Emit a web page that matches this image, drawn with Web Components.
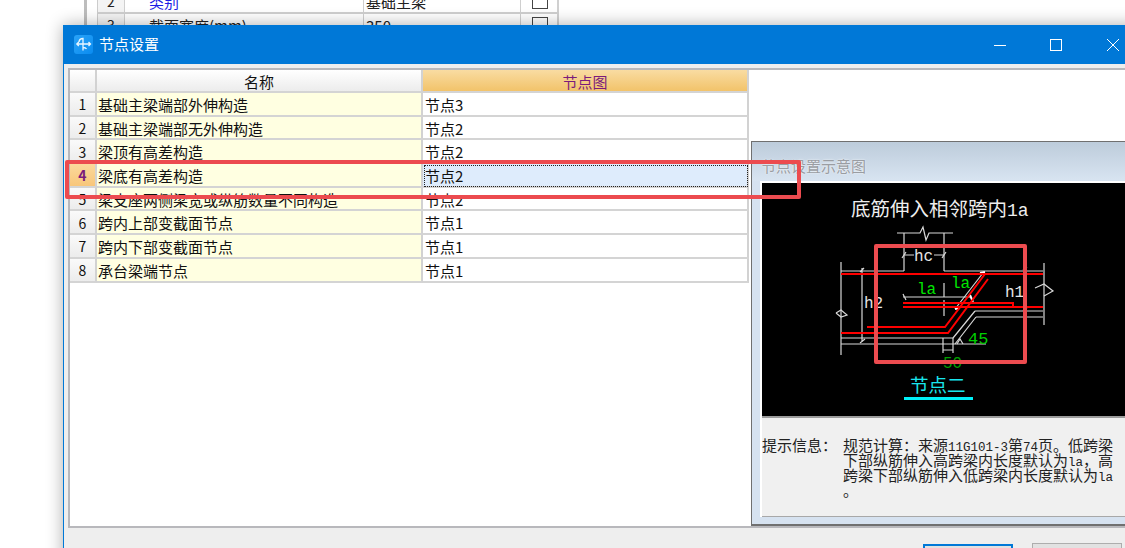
<!DOCTYPE html>
<html lang="zh">
<head>
<meta charset="utf-8">
<title>节点设置</title>
<style>
  html, body { margin: 0; height: 100%; background: #fff; overflow: hidden; }
  body { font: 15px/1.2 "Noto Sans CJK SC", "Liberation Sans", sans-serif; color: #111; }
</style>
</head>
<body>
<back-window></back-window>
<node-dialog>
  <node-table slot="table"></node-table>
  <node-preview slot="preview"></node-preview>
</node-dialog>
<mark-box x="65" y="160" w="736" h="39"></mark-box>
<mark-box x="874" y="244" w="153" h="120"></mark-box>

<script>
const CELL_FONT = '"Noto Sans CJK SC", "Liberation Sans", sans-serif';

class BackWindow extends HTMLElement {
  constructor() {
    super();
    const root = this.attachShadow({ mode: 'open' });
    root.innerHTML = `
      <style>
        :host {
          position: absolute;
          left: 84px;
          top: 0;
          width: 475px;
          height: 40px;
          overflow: hidden;
          display: flex;
          font: 15px ${CELL_FONT};
          color: #222;
        }
        .bar { width: 3px; background: #bdbdbd; margin-right: 10px; }
        .grid {
          width: 462px;
          margin-top: -10px;
          display: grid;
          grid-template-columns: 27px 239px 157px 39px;
          grid-auto-rows: 24px;
          border-left: 1px solid #ccc;
          border-right: 2px solid #d0d0d0;
          box-sizing: border-box;
        }
        .grid > div {
          border-bottom: 2px solid #cfcfcf;
          border-right: 1px solid #cfcfcf;
          display: flex;
          align-items: center;
          box-sizing: border-box;
          white-space: nowrap;
          overflow: hidden;
        }
        .num { justify-content: center; background: #f4f4f4; font-size: 14px; }
        .name { padding-left: 24px; }
        .blue { color: #1c1ce6; }
        .val { padding-left: 2px; }
        .chk { justify-content: center; }
        .chk i { width: 14px; height: 14px; border: 1.5px solid #444; background: #fff; display: block; }
      </style>
      <div class="bar"></div>
      <div class="grid">
        <div class="num">2</div><div class="name blue">类别</div><div class="val">基础主梁</div><div class="chk"><i></i></div>
        <div class="num">3</div><div class="name">截面宽度(mm)</div><div class="val">350</div><div class="chk"><i></i></div>
      </div>
    `;
  }
}

class NodeDialog extends HTMLElement {
  constructor() {
    super();
    const root = this.attachShadow({ mode: 'open' });
    root.innerHTML = `
      <style>
        :host {
          position: absolute;
          left: 63px;
          top: 25px;
          width: 1078px;
          height: 540px;
          display: flex;
          flex-direction: column;
          background: #eee;
          border-left: 1px solid #0078d7;
          box-sizing: border-box;
          box-shadow: 0 0 16px rgba(0,0,0,.32);
        }
        .title {
          height: 39px;
          flex: none;
          background: #0078d7;
          color: #fff;
          display: flex;
          align-items: center;
          padding-left: 10px;
        }
        .title svg.logo { width: 19px; height: 19px; margin-right: 6px; }
        .title span { flex: 1; font-size: 15px; line-height: 37px; height: 39px; }
        .ctl { width: 56.5px; height: 39px; display: flex; align-items: center; justify-content: center; }
        .ctl svg { width: 14px; height: 14px; }
        .panel {
          margin: 4px 0 0 4px;
          height: 460px;
          flex: none;
          box-sizing: border-box;
          border: 2px solid #b8b8bc;
          border-right: 0;
          background: #fff;
          display: flex;
        }
        .left { width: 681px; flex: none; }
        .right { flex: 1; min-width: 0; margin-top: 71px; display: flex; }
        .foot {
          display: flex;
          justify-content: flex-end;
          gap: 19px;
          padding: 15px 19px 0 0;
        }
        .btn { width: 90px; height: 30px; box-sizing: border-box; background: #e1e1e1; border: 1px solid #adadad; }
        .btn.on { border: 2px solid #0078d7; margin-top: 1px; }
      </style>
      <div class="title">
        <svg class="logo" viewBox="0 0 19 19">
          <defs><linearGradient id="lg" x1="0" y1="0" x2="1" y2="1">
            <stop offset="0" stop-color="#2aa3f8"/><stop offset="1" stop-color="#0a8cf0"/>
          </linearGradient></defs>
          <rect width="19" height="19" rx="3" fill="url(#lg)"/>
          <path d="M9 15.5V3.5C6.5 3.5 5.2 5 5 7M2.8 9H16.5M4.8 7L2.8 9L4.8 11M14.5 7L16.5 9L14.5 11M9 12.5C11 12.5 12 13 12.5 14" fill="none" stroke="#e9f6ff" stroke-width="1.3"/>
        </svg>
        <span>节点设置</span>
        <div class="ctl"><svg viewBox="0 0 14 14"><path d="M1 7.5H13" stroke="#fff" stroke-width="1"/></svg></div>
        <div class="ctl"><svg viewBox="0 0 14 14"><rect x="1.5" y="1.5" width="11" height="11" fill="none" stroke="#fff" stroke-width="1"/></svg></div>
        <div class="ctl"><svg viewBox="0 0 14 14"><path d="M1 1L13 13M13 1L1 13" stroke="#fff" stroke-width="1"/></svg></div>
      </div>
      <div class="panel">
        <div class="left"><slot name="table"></slot></div>
        <div class="right"><slot name="preview"></slot></div>
      </div>
      <div class="foot">
        <div class="btn on"></div>
        <div class="btn"></div>
      </div>
    `;
  }
}

class NodeTable extends HTMLElement {
  constructor() {
    super();
    const root = this.attachShadow({ mode: 'open' });
    const rows = [
      ['基础主梁端部外伸构造', '节点3'],
      ['基础主梁端部无外伸构造', '节点2'],
      ['梁顶有高差构造', '节点2'],
      ['梁底有高差构造', '节点2'],
      ['梁支座两侧梁宽或纵筋数量不同构造', '节点2'],
      ['跨内上部变截面节点', '节点1'],
      ['跨内下部变截面节点', '节点1'],
      ['承台梁端节点', '节点1']
    ];
    const body = rows.map((r, i) => {
      const sel = i === 3;
      return `
        <div class="c no ${sel ? 'cur' : ''}">${i + 1}</div>
        <div class="c name">${r[0]}</div>
        <div class="c val ${sel ? 'sel' : ''}">${r[1]}</div>`;
    }).join('');
    root.innerHTML = `
      <style>
        :host {
          display: grid;
          grid-template-columns: 27px 326px 326px;
          grid-template-rows: 23px repeat(8, 23.7px);
          font: 15px ${CELL_FONT};
          color: #111;
        }
        .c {
          display: flex;
          align-items: center;
          box-sizing: border-box;
          padding-top: 1px;
          border-right: 2px solid #d2d2d2;
          border-bottom: 2px solid #d4d4d4;
          white-space: nowrap;
          overflow: hidden;
        }
        .hd { justify-content: center; background: linear-gradient(#fff, #ececec); }
        .hd.on { background: linear-gradient(#f9dca2, #f2c36a); color: #7b1c7b; }
        .no { justify-content: center; background: linear-gradient(#fafafa, #ececec); font-size: 14px; }
        .no.cur { background: linear-gradient(#fbd99c, #f8c67a); color: #7b1c7b; font-weight: 700; }
        .name { background: #ffffe1; padding-left: 1px; }
        .val { background: #fff; padding-left: 2px; }
        .val.sel { background: #deecfc; outline: 1px dotted #222; outline-offset: -2px; }
      </style>
      <div class="c hd"></div>
      <div class="c hd">名称</div>
      <div class="c hd on">节点图</div>
      ${body}
    `;
  }
}

class NodePreview extends HTMLElement {
  constructor() {
    super();
    const root = this.attachShadow({ mode: 'open' });
    root.innerHTML = `
      <style>
        :host {
          flex: 1;
          min-width: 0;
          display: flex;
          flex-direction: column;
          box-sizing: border-box;
          border: 1px solid #707070;
          border-bottom-width: 2px;
          border-right: 0;
          background: #d6e2f0;
          font: 15px ${CELL_FONT};
        }
        .cap {
          height: 39px;
          flex: none;
          box-sizing: border-box;
          padding: 14px 0 0 9px;
          line-height: 20px;
          color: #9a9da2;
          text-shadow: 0 0 2px #fff;
          background: linear-gradient(#bdccdb, #d8e4f1);
        }
        .body { flex: none; margin-left: 8px; border-top: 2px solid #fff; border-left: 2px solid #fff; background: #f0f0f0; }
        .pic { height: 233px; background: #000; border-bottom: 2px solid #9c9c9c; }
        .pic svg { display: block; }
        .info {
          height: 99px;
          box-sizing: border-box;
          padding: 19px 0 0 0;
          display: flex;
          color: #222;
          border-bottom: 1px solid #a8a8a8;
        }
        .info .lb { width: 81px; flex: none; height: 15px; line-height: 15px; white-space: nowrap; }
        .info .tx div { height: 15px; line-height: 15px; white-space: nowrap; }
        .m { font: 12.5px/15px "Liberation Mono", monospace; }
      </style>
      <div class="cap">节点设置示意图</div>
      <div class="body">
        <div class="pic">
          <svg width="379" height="233" viewBox="762 183 379 233" fill="none">
            <g stroke="#d8d8d8" stroke-width="1.2">
              <path d="M897 233H920L923 227L926 240L929 233H953"/>
              <path d="M904 233V271M944 233V271M944 283V297M944 300V316"/>
              <path d="M904 255H914M934 255H944M902 258L906 252M942 258L946 252"/>
              <path d="M841 271H904M944 271H1043"/>
              <path d="M841 262V355M1044 263V325M862 268V342M860 343L865 339M860 272L864 268"/>
              <path d="M836 313L841 310L847 315L841 317L836 313"/>
              <path d="M1035 288L1044 284L1053 291L1044 296"/>
              <path d="M903 297H970M903 294L906 300"/>
              <path d="M975 311H1043M976 317H1043M975 311L953 338M976 317L955 344"/>
              <path d="M841 338H953M841 344H986"/>
              <path d="M943 338V353M953 338V353M943 350H953"/>
              <path d="M955 309L983 273"/>
              <path d="M957 344L960 339L963 344"/>
              <path d="M1023 270L1027 267M1023 311L1027 308"/>
            </g>
            <path d="M955 309L960 308M980 273L985 272M970 295L973 302" stroke="#fff" stroke-width="2"/>
            <g stroke="#f00" stroke-width="2">
              <path d="M841 274H1043"/>
              <path d="M903 303H1013V306M903 307H1043"/>
              <path d="M867 327H945L985 274"/>
              <path d="M841 333H948L988 279"/>
            </g>
            <g font-family="'Liberation Mono', monospace" font-size="16">
              <text x="914" y="261" fill="#e6e6e6">hc</text>
              <text x="864" y="308" fill="#e6e6e6">h2</text>
              <text x="1005" y="297" fill="#e6e6e6">h1</text>
              <text x="917" y="294" fill="#00e600">la</text>
              <text x="951" y="288" fill="#00e600">la</text>
              <text x="968" y="344" fill="#00d000" font-size="17">45</text>
              <text x="943" y="368" fill="#00a000">50</text>
            </g>
            <text x="851" y="216" fill="#eee" font-family='"Noto Sans CJK SC", sans-serif' font-size="19.5">底筋伸入相邻跨内<tspan font-family="'Liberation Mono', monospace" font-size="18">1a</tspan></text>
            <text x="910" y="392" fill="#19e6ee" font-family='"Noto Sans CJK SC", sans-serif' font-size="18.5">节点二</text>
            <rect x="904" y="397" width="69" height="3" fill="#00f0f8"/>
          </svg>
        </div>
        <div class="info">
          <div class="lb">提示信息：</div>
          <div class="tx">
            <div>规范计算：来源<span class="m">11G101-3</span>第<span class="m">74</span>页。低跨梁</div>
            <div>下部纵筋伸入高跨梁内长度默认为<span class="m">la</span>，高</div>
            <div>跨梁下部纵筋伸入低跨梁内长度默认为<span class="m">la</span></div>
            <div>。</div>
          </div>
        </div>
      </div>
    `;
  }
}

// red annotation rectangles drawn on top of the screenshot
class MarkBox extends HTMLElement {
  constructor() {
    super();
    this.attachShadow({ mode: 'open' }).innerHTML = `
      <style>
        :host {
          position: absolute;
          box-sizing: border-box;
          border: 4px solid #ec4b4f;
          border-radius: 2px;
          pointer-events: none;
        }
      </style>
    `;
  }

  connectedCallback() {
    this.style.left = this.getAttribute('x') + 'px';
    this.style.top = this.getAttribute('y') + 'px';
    this.style.width = this.getAttribute('w') + 'px';
    this.style.height = this.getAttribute('h') + 'px';
  }
}

customElements.define('back-window', BackWindow);
customElements.define('node-dialog', NodeDialog);
customElements.define('node-table', NodeTable);
customElements.define('node-preview', NodePreview);
customElements.define('mark-box', MarkBox);
</script>
</body>
</html>
